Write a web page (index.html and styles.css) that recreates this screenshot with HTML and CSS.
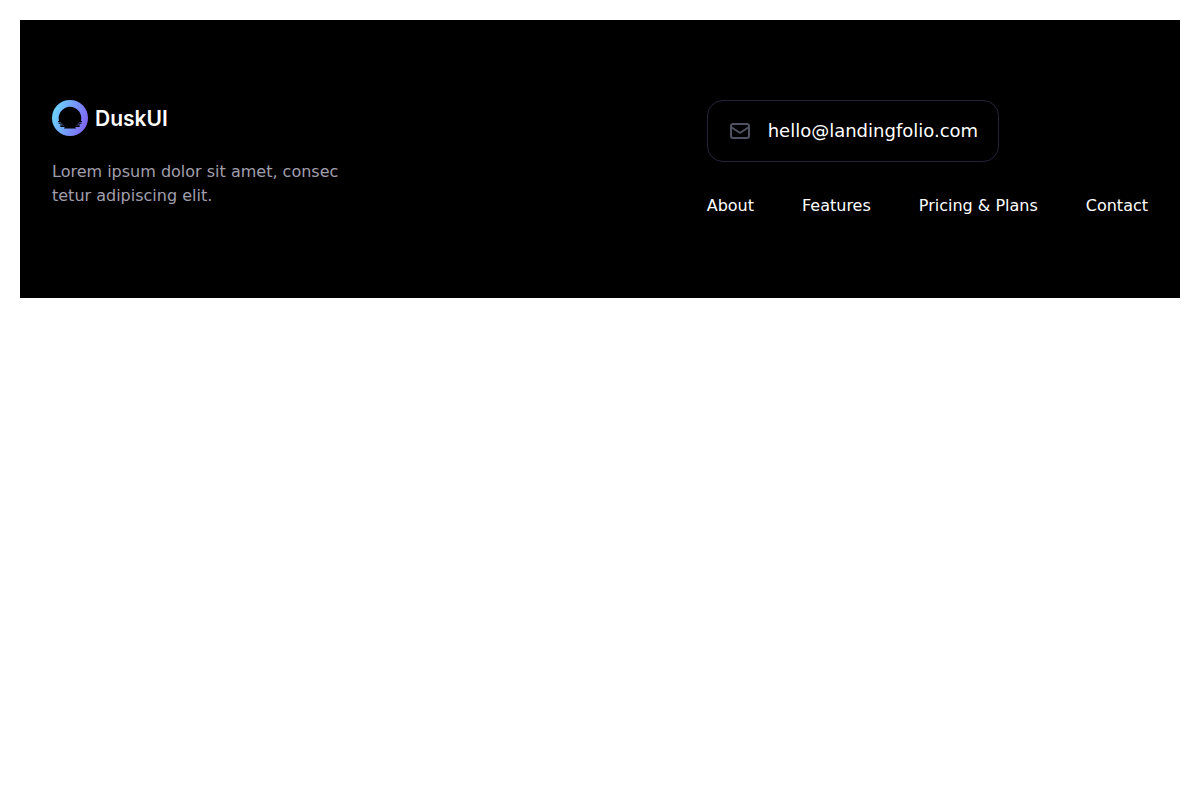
FILE: index.html
```html
<!DOCTYPE html>
<html lang="en">
<head>
<meta charset="utf-8">
<meta name="viewport" content="width=device-width, initial-scale=1">
<title>DuskUI</title>
<link rel="stylesheet" href="styles.css">
</head>
<body>
<footer class="footer">
  <div class="brand">
    <a class="logo" href="#">
      <svg class="logo-mark" viewBox="0 0 36 36" aria-hidden="true">
        <defs>
          <linearGradient id="dusk" x1="0" y1="0.35" x2="1" y2="0.65">
            <stop offset="0" stop-color="#6bd6ff"/>
            <stop offset="1" stop-color="#8062f5"/>
          </linearGradient>
        </defs>
        <circle cx="18" cy="18" r="18" fill="url(#dusk)"/>
        <path fill="#000" d="M18 6.8A11.4 11.4 0 0 0 7 21H6V22H9V22.6H6.6V23.8H10.4V24.4H8V25.2H12.4V25.6H8.4V27H13V27.6H12V28.6H24V27.6H23V27H27.6V25.6H23.6V25.2H28V24.4H25.6V23.8H29.4V22.6H27V22H30V21H29A11.4 11.4 0 0 0 18 6.8Z"/>
      </svg>
      <span class="logo-name">DuskUI</span>
    </a>
    <p class="tagline">Lorem ipsum dolor sit amet, consec tetur adipiscing elit.</p>
  </div>
  <div class="contact">
    <a class="email" href="mailto:hello@landingfolio.com">
      <svg class="email-icon" viewBox="0 0 24 24" fill="none" stroke="currentColor" stroke-width="2" stroke-linecap="round" stroke-linejoin="round" aria-hidden="true">
        <path d="M3 8l7.89 5.26a2 2 0 0 0 2.22 0L21 8M5 19h14a2 2 0 0 0 2-2V7a2 2 0 0 0-2-2H5a2 2 0 0 0-2 2v10a2 2 0 0 0 2 2z"/>
      </svg>
      hello@landingfolio.com
    </a>
    <nav class="links" aria-label="Footer">
      <a href="#">About</a>
      <a href="#">Features</a>
      <a href="#">Pricing &amp; Plans</a>
      <a href="#">Contact</a>
    </nav>
  </div>
</footer>
</body>
</html>
```
FILE: styles.css
```css
*, *::before, *::after { box-sizing: border-box; }

body {
  margin: 0;
  padding: 20px;
  background: #fff;
  font-family: "DejaVu Sans", sans-serif;
  font-size: 16px;
  line-height: 24px;
}

a { color: inherit; text-decoration: none; }

.footer {
  display: flex;
  flex-wrap: wrap;
  justify-content: space-between;
  gap: 32px;
  padding: 80px 32px;
  background: #000;
  color: #fff;
}

.logo {
  display: inline-flex;
  align-items: center;
  gap: 7px;
  vertical-align: top;
}

.logo-mark { width: 36px; height: 36px; }

.logo-name {
  font-family: Inter, sans-serif;
  font-size: 21px;
  font-weight: 600;
  line-height: 25px;
}

.tagline {
  max-width: 320px;
  margin: 24px 0 0;
  color: #a09fac;
}

.email {
  display: inline-flex;
  align-items: center;
  gap: 16px;
  padding: 16px 20px;
  border: 1px solid #252338;
  border-radius: 16px;
  font-size: 18px;
  line-height: 28px;
  vertical-align: top;
}

.email-icon {
  width: 24px;
  height: 24px;
  color: #4e5160;
}

.links {
  display: flex;
  flex-wrap: wrap;
  gap: 16px 48px;
  margin-top: 32px;
}
```
